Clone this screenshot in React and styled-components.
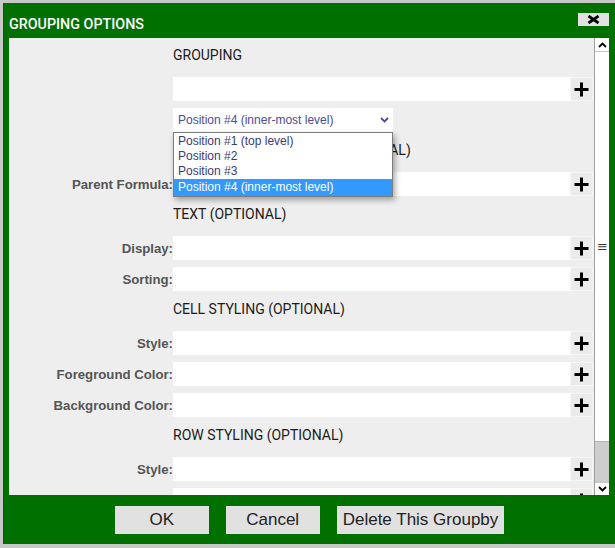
import React from "react";
import styled, { createGlobalStyle } from "styled-components";

const GlobalStyle = createGlobalStyle`
  html, body {
    margin: 0;
    padding: 0;
    background: #c8c8c8;
    font-family: "Liberation Sans", Arial, sans-serif;
  }
  * { box-sizing: border-box; }
`;

const Dialog = styled.div`
  width: 612px;
  height: 541px;
  margin: 3px 0 0 3px;
  background: #007000;
  display: flex;
  flex-direction: column;
  border-left: 1px solid #0a5a0a;
`;

const TitleBar = styled.div`
  height: 35px;
  display: flex;
  justify-content: space-between;
  align-items: flex-start;
  padding: 10px 6px 0 5px;
  flex: none;
`;

const Title = styled.div`
  margin-top: 2px;
  color: #ffffff;
  font-family: Roboto, "Noto Sans", sans-serif;
  font-weight: 500;
  font-size: 14.3px;
  line-height: 18px;
`;

const CloseButton = styled.button`
  width: 31px;
  height: 13px;
  padding: 0;
  border: none;
  background: #e2e2e2;
  display: flex;
  align-items: center;
  justify-content: center;
`;

const Body = styled.div`
  position: relative;
  display: flex;
  height: 457px;
  margin: 0 6px 0 5px;
  flex: none;
`;

const ScrollArea = styled.div`
  flex: 1;
  background: #eeeeee;
  overflow: hidden;
  padding-top: 6px;
`;

const Form = styled.div`
  display: grid;
  grid-template-columns: 164px 397px 23px;
  row-gap: 7px;
  align-items: center;
`;

const SectionTitle = styled.div`
  grid-column: 2 / span 2;
  height: 26px;
  line-height: 22px;
  font-family: Roboto, "Noto Sans", sans-serif;
  font-size: 14px;
  color: #1c1c1c;
  white-space: nowrap;
`;

const Label = styled.label`
  grid-column: 1;
  text-align: right;
  font-family: "Liberation Sans", Arial, sans-serif;
  font-weight: bold;
  font-size: 13.2px;
  color: #555555;
  white-space: nowrap;
`;

const TextInput = styled.input`
  grid-column: 2;
  height: 24px;
  border: none;
  outline: none;
  background: #ffffff;
  padding: 0 4px;
  font-family: "Liberation Sans", Arial, sans-serif;
  font-size: 12px;
`;

const PlusButton = styled.button`
  grid-column: 3;
  height: 24px;
  padding: 0;
  border: 1px solid #f6f6f6;
  background: #ebebeb;
  display: flex;
  align-items: center;
  justify-content: center;
`;

const SelectCell = styled.div`
  grid-column: 2 / span 2;
  position: relative;
  height: 24px;
`;

const SelectBox = styled.div`
  width: 220px;
  height: 24px;
  background: #ffffff;
  display: flex;
  align-items: center;
  justify-content: space-between;
  padding: 0 4px 0 5px;
  font-family: "Liberation Sans", Arial, sans-serif;
  font-size: 12px;
  color: #4b4b9c;
`;

const OptionList = styled.ul`
  position: absolute;
  top: 24px;
  left: 0;
  width: 220px;
  margin: 0;
  padding: 1px 0 0 0;
  list-style: none;
  background: #ffffff;
  border: 1px solid #7c7c7c;
  box-shadow: 2px 3px 6px rgba(0, 0, 0, 0.35);
  z-index: 2;
`;

const OptionItem = styled.li`
  height: ${(p) => (p.$selected ? 17 : 15)}px;
  line-height: ${(p) => (p.$selected ? 16 : 15)}px;
  padding-left: 4px;
  font-family: "Liberation Sans", Arial, sans-serif;
  font-size: 12px;
  color: ${(p) => (p.$selected ? "#ffffff" : "#3a3a7c")};
  background: ${(p) => (p.$selected ? "#3399ff" : "transparent")};
  white-space: nowrap;
`;

const Scrollbar = styled.div`
  width: 15px;
  display: flex;
  flex-direction: column;
  background: #ffffff;
  border-left: 1px solid #a0a0a0;
`;

const ScrollArrow = styled.div`
  height: ${(p) => p.$h}px;
  display: flex;
  align-items: center;
  justify-content: center;
  background: #ffffff;
  border-bottom: ${(p) => (p.$top ? "1px solid #c8c8c8" : "none")};
  border-top: ${(p) => (p.$top ? "none" : "1px solid #c8c8c8")};
  flex: none;
`;

const Track = styled.div`
  flex: 1;
  display: flex;
  flex-direction: column;
  justify-content: flex-end;
`;

const Thumb = styled.div`
  height: 41px;
  background: #cdcdcd;
  border-top: 1px solid #b4b4b4;
`;

const Handle = styled.span`
  position: absolute;
  left: 588px;
  top: 202px;
  font-family: "DejaVu Sans", sans-serif;
  font-size: 13px;
  line-height: 13px;
  color: #333333;
`;

const Footer = styled.div`
  flex: 1;
  display: flex;
  justify-content: center;
  align-items: flex-start;
  gap: 17px;
  padding-top: 11px;
`;

const ActionButton = styled.button`
  min-width: 94px;
  height: 28px;
  padding: 0 6px;
  border: none;
  background: #e1e1e1;
  color: #222222;
  font-family: "Liberation Sans", Arial, sans-serif;
  font-size: 17px;
`;

const Plus = () => (
  <svg width="15" height="15" viewBox="0 0 15 15">
    <path d="M7.5 0.5v14M0.5 7.5h14" stroke="#000" strokeWidth="3" />
  </svg>
);

const Chevron = ({ up, color = "#000", w = 9, h = 6 }) => (
  <svg width={w} height={h} viewBox="0 0 9 6">
    <path
      d={up ? "M1 5L4.5 1.5L8 5" : "M1 1L4.5 4.5L8 1"}
      fill="none"
      stroke={color}
      strokeWidth="1.8"
    />
  </svg>
);

const CloseIcon = () => (
  <svg width="13" height="9" viewBox="0 0 13 9">
    <path d="M1.5 1L11.5 8M11.5 1L1.5 8" stroke="#000" strokeWidth="2.8" />
  </svg>
);

const options = [
  "Position #1 (top level)",
  "Position #2",
  "Position #3",
  "Position #4 (inner-most level)",
];

const Field = ({ label }) => (
  <>
    <Label>{label}</Label>
    <TextInput type="text" />
    <PlusButton>
      <Plus />
    </PlusButton>
  </>
);

export default function App() {
  return (
    <>
      <GlobalStyle />
      <Dialog>
        <TitleBar>
          <Title>GROUPING OPTIONS</Title>
          <CloseButton>
            <CloseIcon />
          </CloseButton>
        </TitleBar>
        <Body>
          <ScrollArea>
            <Form>
              <SectionTitle>GROUPING</SectionTitle>
              <Field label="" />
              <SelectCell>
                <SelectBox>
                  <span>Position #4 (inner-most level)</span>
                  <Chevron color="#4b4b9c" w={9} h={6} />
                </SelectBox>
                <OptionList>
                  {options.map((o, i) => (
                    <OptionItem key={o} $selected={i === 3}>
                      {o}
                    </OptionItem>
                  ))}
                </OptionList>
              </SelectCell>
              <SectionTitle>PARENT GROUPING LINK (OPTIONAL)</SectionTitle>
              <Field label="Parent Formula:" />
              <SectionTitle>TEXT (OPTIONAL)</SectionTitle>
              <Field label="Display:" />
              <Field label="Sorting:" />
              <SectionTitle>CELL STYLING (OPTIONAL)</SectionTitle>
              <Field label="Style:" />
              <Field label="Foreground Color:" />
              <Field label="Background Color:" />
              <SectionTitle>ROW STYLING (OPTIONAL)</SectionTitle>
              <Field label="Style:" />
              <Field label="Foreground Color:" />
              <Field label="Background Color:" />
            </Form>
          </ScrollArea>
          <Scrollbar>
            <ScrollArrow $top $h={14}>
              <Chevron up />
            </ScrollArrow>
            <Track>
              <Thumb />
            </Track>
            <ScrollArrow $h={13}>
              <Chevron />
            </ScrollArrow>
          </Scrollbar>
          <Handle>≡</Handle>
        </Body>
        <Footer>
          <ActionButton>OK</ActionButton>
          <ActionButton>Cancel</ActionButton>
          <ActionButton>Delete This Groupby</ActionButton>
        </Footer>
      </Dialog>
    </>
  );
}
